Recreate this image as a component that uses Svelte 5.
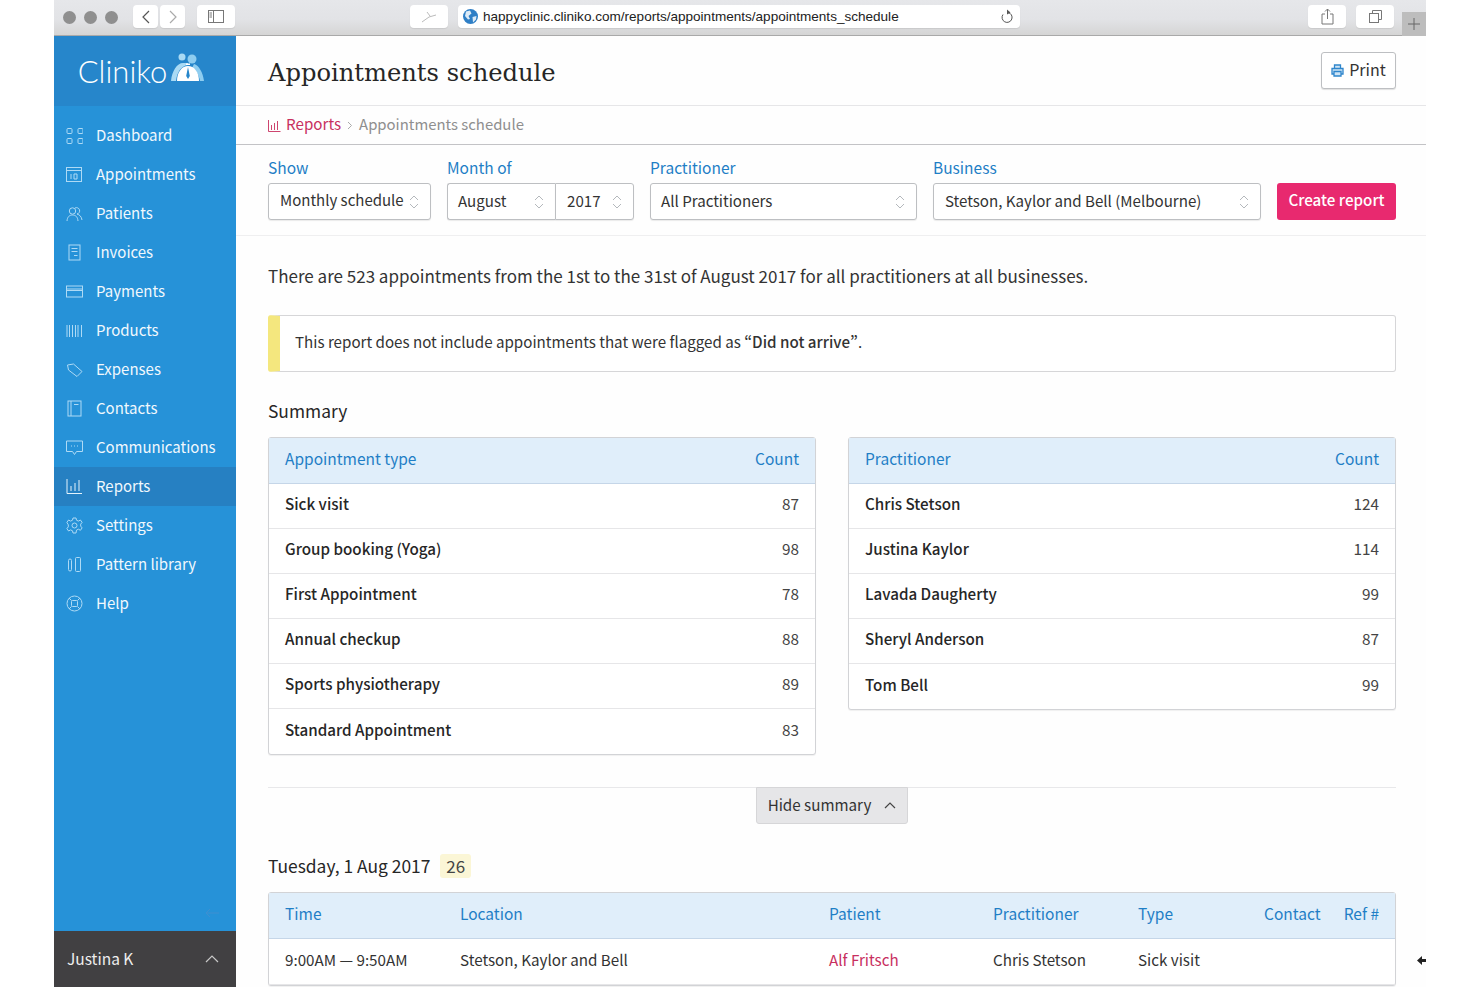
<script>
  const nav = [
    ['dashboard', 'Dashboard'],
    ['calendar', 'Appointments'],
    ['patients', 'Patients'],
    ['invoice', 'Invoices'],
    ['card', 'Payments'],
    ['barcode', 'Products'],
    ['tag', 'Expenses'],
    ['book', 'Contacts'],
    ['chat', 'Communications'],
    ['chart', 'Reports'],
    ['gear', 'Settings'],
    ['pattern', 'Pattern library'],
    ['help', 'Help']
  ];

  const icons = {
    dashboard: '<rect x="1" y="1.500" width="5" height="5" rx="1"/><rect x="12" y="1.500" width="5" height="5" rx="1"/><rect x="1" y="11.500" width="5" height="5" rx="1"/><rect x="12" y="11.500" width="5" height="5" rx="1"/>',
    calendar: '<rect x=".5" y="1.500" width="15" height="14"/><path d="M.5 4.500h15"/><path d="M5 8v5M8 8h3v5H8z"/>',
    patients: '<circle cx="6.500" cy="6" r="3.200"/><path d="M1 16c.3-4 2.300-6 5.500-6s5.200 2 5.500 6"/><path d="M9 3a3.200 3.200 0 1 1 2 6c2.500.7 4.500 2.500 5 6"/>',
    invoice: '<rect x="3" y="1" width="11" height="15"/><path d="M5.500 4.500h6M5.500 7.500h6M8 11.500h3.500"/>',
    card: '<rect x=".5" y="3" width="16" height="11"/><path d="M.5 6h16M.5 7.500h16"/>',
    barcode: '<path d="M1 3v12M3.500 3v12M6.500 3v12M9.500 3v12M12 3v12M15.500 3v12"/>',
    tag: '<path d="M1.500 4l6-1 8.500 7.500-5 5L2.500 9z"/>',
    book: '<rect x="2" y="1" width="13" height="15"/><path d="M5 1v15M8 4.500h4.500"/>',
    chat: '<path d="M.5 2h16v10.500h-6l-2 3-2-3h-6z"/><path d="M5 7h1M8 7h1M11 7h1"/>',
    chart: '<path d="M1 1v14.500h15"/><path d="M5 8v5M9 5v8M13 2v11"/>',
    gear: '<circle cx="8.500" cy="8.500" r="2.500"/><path d="M7 1h3l.5 2.200 1.900.9 2-1.100 1.700 2.400-1.400 1.700v2l1.400 1.800-1.700 2.400-2-1.100-1.900.9L10 16H7l-.5-2.200-1.900-.9-2 1.100-1.700-2.400 1.400-1.800v-2L.9 5.400 2.600 3l2 1.100 1.900-.9z"/>',
    pattern: '<rect x="2.500" y="3" width="3" height="12" rx="1.500"/><rect x="9.500" y="1.500" width="5" height="14" rx="1"/>',
    help: '<circle cx="8.500" cy="8.500" r="7.500"/><rect x="5.500" y="5.500" width="6" height="6" rx="1"/><path d="M3 3l2.500 2.500M14 3l-2.500 2.500M3 14l2.500-2.500M14 14l-2.500-2.500"/>'
  };

  const types = [
    ['Sick visit', 87],
    ['Group booking (Yoga)', 98],
    ['First Appointment', 78],
    ['Annual checkup', 88],
    ['Sports physiotherapy', 89],
    ['Standard Appointment', 83]
  ];

  const practitioners = [
    ['Chris Stetson', 124],
    ['Justina Kaylor', 114],
    ['Lavada Daugherty', 99],
    ['Sheryl Anderson', 87],
    ['Tom Bell', 99]
  ];
</script>

{#snippet updown()}
  <svg class="updown" width="10" height="16" viewBox="0 0 10 16" fill="none" stroke="#b4b8bc" stroke-width="1">
    <path d="M1 6l4-4 4 4M1 10l4 4 4-4" />
  </svg>
{/snippet}

{#snippet summary(title, rows)}
  <table class="data">
    <thead>
      <tr><th>{title}</th><th class="num">Count</th></tr>
    </thead>
    <tbody>
      {#each rows as row}
        <tr><td class="strong">{row[0]}</td><td class="num">{row[1]}</td></tr>
      {/each}
    </tbody>
  </table>
{/snippet}

<div class="window">
  <header class="chrome">
    <div class="lights"><i></i><i></i><i></i></div>
    <div class="tool back">
      <svg width="10" height="16" viewBox="0 0 10 16" fill="none" stroke="#555" stroke-width="1.200"><path d="M8 2L2 8l6 6" /></svg>
    </div>
    <div class="tool back">
      <svg width="10" height="16" viewBox="0 0 10 16" fill="none" stroke="#aaa" stroke-width="1.200"><path d="M2 2l6 6-6 6" /></svg>
    </div>
    <div class="tool side">
      <svg width="16" height="13" viewBox="0 0 16 13" fill="none" stroke="#777"><rect x=".5" y=".5" width="15" height="12" /><path d="M5.500 .5v12M1.500 3h2.500M1.500 5h2.500M1.500 7h2.500" /></svg>
    </div>
    <div class="tool pin">
      <svg width="16" height="12" viewBox="0 0 16 12" fill="none" stroke="#bbb"><path d="M1 11l7-5 7-2M6 1l3 4" /></svg>
    </div>
    <div class="url">
      <svg width="15" height="15" viewBox="0 0 15 15"><circle cx="7.500" cy="7.500" r="7.500" fill="#2f7fc6" /><path d="M3 2.500l4-1 1.500 3-3 2.500 1.500 3-2 .5-3-3.500zM9.500 8l4-1-.5 3.500-3 3z" fill="#dcebf7" /></svg>
      <span class="address">happyclinic.cliniko.com/reports/appointments/appointments_schedule</span>
      <svg class="reload" width="14" height="15" viewBox="0 0 14 15" fill="none" stroke="#555"><path d="M8 3.500a5 5 0 1 1-5 2" /><path d="M7 .5l3.500 3-3.500 2z" fill="#555" stroke="none" /></svg>
    </div>
    <div class="tool share">
      <svg width="13" height="17" viewBox="0 0 13 17" fill="none" stroke="#777"><path d="M4 6H1v10h11V6H9M6.500 11V1M4 3.500L6.500 1 9 3.500" /></svg>
    </div>
    <div class="tool tabs">
      <svg width="13" height="13" viewBox="0 0 13 13" fill="none" stroke="#777"><rect x=".5" y="3.500" width="9" height="9" /><path d="M3.500 3.500v-3h9v9h-3" /></svg>
    </div>
    <div class="plus">
      <svg width="12" height="12" viewBox="0 0 12 12" stroke="#666"><path d="M6 0v12M0 6h12" /></svg>
    </div>
  </header>

  <div class="body">
    <aside class="sidebar">
      <div class="logo">
        <span class="wordmark">Cliniko</span>
        <svg width="33" height="30" viewBox="0 0 33 30">
          <circle cx="21" cy="7" r="4.500" fill="#8ecdf0" />
          <path d="M23 12c5 1 9 9 10 17h-4c-1-6-4-11-8-13z" fill="#8ecdf0" />
          <circle cx="11" cy="5" r="3.500" fill="#a9daf4" />
          <path d="M0 29C1 19 6 11 12 11h5v2C10 14 6 20 5 29z" fill="#a9daf4" />
          <path d="M6 29c0-9 5-15 11-15s11 6 11 15z" fill="#fff" />
          <path d="M15 11.500h4v1.500h-4z" fill="#fff" />
          <path d="M17 15l1.800 9-1.800 3-1.800-3z" fill="#2686cb" />
        </svg>
      </div>
      <nav class="menu">
        {#each nav as [icon, label]}
          <a class="item" class:active={label === 'Reports'} href="#{icon}">
            <svg width="17" height="17" viewBox="0 0 17 17" fill="none" stroke={label === 'Reports' ? '#e4f3fc' : '#aedaf5'} stroke-width="1">{@html icons[icon]}</svg>
            <span>{label}</span>
          </a>
        {/each}
      </nav>
      <div class="collapse">
        <svg width="14" height="10" viewBox="0 0 14 10" fill="none" stroke="#3f8fd0"><path d="M14 5H1M5 1L1 5l4 4" /></svg>
      </div>
      <div class="user">
        <span>Justina K</span>
        <svg width="14" height="8" viewBox="0 0 14 8" fill="none" stroke="#c8c8c8" stroke-width="1.200"><path d="M1 7l6-6 6 6" /></svg>
      </div>
    </aside>

    <main class="main">
      <div class="titlebar">
        <h1>Appointments schedule</h1>
        <button class="print">
          <svg width="13" height="13" viewBox="0 0 13 13" fill="#cfe4f5" stroke="#2f86cc" stroke-width="1.300"><path d="M3.500 4V1h6v3M3 10H1V4.500h11V10h-2M3 7.500h7V12H3z" /></svg>
          <span>Print</span>
        </button>
      </div>

      <div class="crumbs">
        <svg width="13" height="13" viewBox="0 0 13 13" fill="none" stroke="#c8305f" stroke-width=".9"><path d="M.5 1v11.500h12M3.500 6v5M6.500 4v7M9.500 2v9" /></svg>
        <a href="#reports">Reports</a>
        <svg width="6" height="9" viewBox="0 0 6 9" fill="none" stroke="#aaa"><path d="M1 1l3.500 3.500L1 8" /></svg>
        <span>Appointments schedule</span>
      </div>

      <form class="filters">
        <div class="field w-show">
          <span class="caption">Show</span>
          <div class="select"><span>Monthly schedule</span>{@render updown()}</div>
        </div>
        <div class="field w-month">
          <span class="caption">Month of</span>
          <div class="pair">
            <div class="select month"><span>August</span>{@render updown()}</div>
            <div class="select year"><span>2017</span>{@render updown()}</div>
          </div>
        </div>
        <div class="field w-pract">
          <span class="caption">Practitioner</span>
          <div class="select"><span>All Practitioners</span>{@render updown()}</div>
        </div>
        <div class="field w-biz">
          <span class="caption">Business</span>
          <div class="select"><span>Stetson, Kaylor and Bell (Melbourne)</span>{@render updown()}</div>
        </div>
        <button class="create" type="button">Create report</button>
      </form>

      <section class="content">
        <p class="lead">There are 523 appointments from the 1st to the 31st of August 2017 for all practitioners at all businesses.</p>

        <div class="notice">
          <span>This report does not include appointments that were flagged as <b>“Did not arrive”</b>.</span>
        </div>

        <h2 class="sum-title">Summary</h2>
        <div class="columns">
          {@render summary('Appointment type', types)}
          {@render summary('Practitioner', practitioners)}
        </div>

        <div class="divider">
          <button class="hide" type="button">
            <span>Hide summary</span>
            <svg width="12" height="7" viewBox="0 0 12 7" fill="none" stroke="#444" stroke-width="1.200"><path d="M1 6l5-5 5 5" /></svg>
          </button>
        </div>

        <h2 class="day">Tuesday, 1 Aug 2017 <span class="badge">26</span></h2>

        <table class="data schedule">
          <colgroup>
            <col class="c-time" /><col class="c-loc" /><col class="c-pat" /><col class="c-pra" /><col class="c-typ" /><col class="c-con" /><col />
          </colgroup>
          <thead>
            <tr><th>Time</th><th>Location</th><th>Patient</th><th>Practitioner</th><th>Type</th><th>Contact</th><th class="num ref">Ref #</th></tr>
          </thead>
          <tbody>
            <tr>
              <td>9:00AM — 9:50AM</td>
              <td>Stetson, Kaylor and Bell</td>
              <td><a href="#alf">Alf Fritsch</a></td>
              <td>Chris Stetson</td>
              <td>Sick visit</td>
              <td></td>
              <td></td>
            </tr>
          </tbody>
        </table>
      </section>
    </main>

    <svg class="cursor" width="10" height="9" viewBox="0 0 10 9"><path d="M5 0v3h4v3H5v3L0 4.500z" fill="#222" /></svg>
  </div>
</div>

<style>
  :global(body) {
    margin: 0;
    background: #fff;
    font-family: "Noto Sans CJK SC", "Noto Sans", sans-serif;
    color: #2b2b2b;
  }

  .window {
    margin: 0 54px;
    height: 987px;
    overflow: hidden;
    display: flex;
    flex-direction: column;
  }

  .chrome {
    height: 36px;
    flex: none;
    box-sizing: border-box;
    display: flex;
    align-items: flex-start;
    padding-top: 5px;
    background: linear-gradient(#e6e7ea, #e2e3e6 55%, #d5d5d5);
    border-bottom: 1px solid #a9a9a9;
  }
  .lights {
    display: flex;
    gap: 8px;
    margin: 6px 15px 0 9px;
  }
  .lights i {
    width: 13px;
    height: 13px;
    border-radius: 50%;
    background: #8f8f8f;
  }
  .tool {
    height: 23px;
    background: #fff;
    border-radius: 4px;
    display: flex;
    align-items: center;
    justify-content: center;
    box-shadow: 0 1px 1px rgba(0, 0, 0, .08);
  }
  .back { width: 25px; margin-right: 2px; }
  .side { width: 38px; margin-left: 10px; }
  .pin { width: 38px; margin-left: 175px; }
  .share { width: 38px; margin-left: 288px; }
  .tabs { width: 38px; margin-left: 10px; }
  .url {
    width: 562px;
    height: 23px;
    margin-left: 10px;
    box-sizing: border-box;
    padding: 0 6px 0 5px;
    background: #fff;
    border-radius: 4px;
    display: flex;
    align-items: center;
    gap: 5px;
    box-shadow: 0 1px 1px rgba(0, 0, 0, .08);
  }
  .address {
    font-family: "Liberation Sans", sans-serif;
    font-size: 13.550px;
    color: #222;
    flex: 1;
  }
  .plus {
    width: 24px;
    height: 24px;
    margin: 7px 0 0 auto;
    background: #bdbdbd;
    display: flex;
    align-items: center;
    justify-content: center;
  }

  .body {
    flex: 1;
    display: flex;
    position: relative;
    min-height: 0;
  }

  .sidebar {
    width: 182px;
    flex: none;
    background: #2692d8;
    display: flex;
    flex-direction: column;
  }
  .logo {
    height: 70px;
    flex: none;
    background: #2686cb;
    display: flex;
    align-items: center;
    justify-content: center;
    gap: 4px;
    padding: 0 8px 0 0;
  }
  .wordmark {
    font-family: Lato, sans-serif;
    font-weight: 300;
    font-size: 31px;
    color: #fff;
  }
  .logo svg { margin-top: -8px; }
  .menu {
    display: flex;
    flex-direction: column;
    padding-top: 10px;
    flex: 1;
  }
  .item {
    height: 39px;
    display: flex;
    align-items: center;
    gap: 13px;
    padding-left: 12px;
    color: #f1f8fd;
    font-size: 15px;
    text-decoration: none;
  }
  .item span { padding-bottom: 2px; }
  .item.active { background: #2680c2; }
  .collapse {
    height: 35px;
    display: flex;
    justify-content: flex-end;
    align-items: flex-start;
    padding: 12px 17px 0 0;
    box-sizing: border-box;
  }
  .user {
    height: 56px;
    flex: none;
    box-sizing: border-box;
    background: #414042;
    color: #efefef;
    display: flex;
    align-items: center;
    justify-content: space-between;
    padding: 0 17px 0 13px;
    font-size: 15.500px;
  }
  .user span { padding-bottom: 2px; }

  .main {
    flex: 1;
    min-width: 0;
    background: #fefefe;
  }
  .titlebar {
    height: 70px;
    box-sizing: border-box;
    display: flex;
    align-items: center;
    justify-content: space-between;
    padding: 0 30px 0 32px;
    border-bottom: 1px solid #e6e6e8;
  }
  h1 {
    margin: 0;
    padding-top: 4px;
    font-family: "DejaVu Serif", serif;
    font-weight: 400;
    font-size: 24.200px;
    color: #262626;
  }
  .print {
    width: 75px;
    height: 37px;
    margin-top: -1px;
    background: #fff;
    border: 1px solid #bdbfc2;
    border-radius: 3px;
    box-shadow: 0 1px 1px rgba(0, 0, 0, .12);
    font: inherit;
    font-size: 16px;
    color: #333;
    display: flex;
    align-items: center;
    justify-content: center;
    gap: 5px;
    padding: 0;
  }
  .print span { padding-bottom: 3px; }
  .crumbs {
    height: 39px;
    box-sizing: border-box;
    display: flex;
    align-items: center;
    gap: 5px;
    padding-left: 32px;
    border-bottom: 1px solid #c3c3c6;
    font-size: 15.200px;
    color: #8f8f8f;
  }
  .crumbs a, .crumbs span { padding-bottom: 4px; }
  .crumbs a { color: #c8305f; text-decoration: none; }
  .crumbs span { font-size: 14.900px; }
  .crumbs svg:nth-of-type(2) { margin: 0 1px; }

  .filters {
    height: 91px;
    box-sizing: border-box;
    display: flex;
    align-items: flex-end;
    gap: 16px;
    padding: 0 30px 15px 32px;
    border-bottom: 1px solid #efeff0;
  }
  .field { display: flex; flex-direction: column; gap: 6px; }
  .w-show { width: 163px; }
  .w-month { width: 187px; }
  .w-pract { width: 267px; }
  .w-biz { width: 328px; }
  .w-pract .select { padding-left: 10px; }
  .caption {
    font-size: 15.500px;
    line-height: 20px;
    color: #1f7ec6;
  }
  .select {
    height: 37px;
    box-sizing: border-box;
    background: #fff;
    border: 1px solid #bdbfc2;
    border-radius: 3px;
    box-shadow: 0 1px 1px rgba(0, 0, 0, .08);
    display: flex;
    align-items: center;
    justify-content: space-between;
    padding: 0 11px;
    font-size: 15.100px;
    color: #333;
    white-space: nowrap;
  }
  .select span { padding-bottom: 4px; }
  .w-show .select span { font-size: 15px; }
  .pair { display: flex; }
  .month { width: 108px; padding-left: 10px; border-radius: 3px 0 0 3px; border-right: 0; }
  .year { flex: 1; border-radius: 0 3px 3px 0; }
  .create {
    width: 119px;
    height: 37px;
    flex: none;
    padding: 0 0 5px;
    border: 0;
    border-radius: 3px;
    background: #e8296f;
    color: #fff;
    font: inherit;
    font-size: 15.200px;
    font-weight: 500;
  }

  .content { padding: 0 30px 0 32px; }
  .lead {
    margin: 0;
    padding-top: 28px;
    font-size: 17px;
    line-height: 24px;
    color: #333;
  }
  .notice {
    margin-top: 27px;
    height: 57px;
    box-sizing: border-box;
    background: #fff;
    border: 1px solid #d6d6d8;
    border-left: 12px solid #f4e77e;
    border-radius: 3px;
    display: flex;
    align-items: center;
    padding: 0 0 6px 15px;
    font-size: 15.150px;
    color: #333;
  }
  .notice b { font-weight: 500; font-feature-settings: "pwid"; }
  .sum-title {
    margin: 27px 0 14px;
    font-weight: 400;
    font-size: 17.400px;
    line-height: 24px;
    color: #262626;
  }
  .columns {
    display: grid;
    grid-template-columns: 1fr 1fr;
    gap: 32px;
    align-items: start;
  }

  table.data {
    width: 100%;
    border-collapse: separate;
    border-spacing: 0;
    background: #fff;
    border: 1px solid #d2d3d6;
    border-radius: 3px;
    box-shadow: 0 1px 1px rgba(0, 0, 0, .06);
    font-size: 15.500px;
  }
  .data th {
    height: 46px;
    box-sizing: border-box;
    padding: 0 16px 5px;
    background: #e0eefa;
    border-bottom: 1px solid #c5d6e8;
    text-align: left;
    font-weight: 400;
    color: #1f7ec6;
  }
  .data th.ref { padding-left: 0; white-space: nowrap; }
  .data td {
    height: 45px;
    box-sizing: border-box;
    padding: 0 16px 6px;
    border-bottom: 1px solid #e6e6e8;
    font-size: 15.300px;
    color: #333;
  }
  .data tr:last-child td { border-bottom: 0; }
  .data td.strong { font-weight: 500; font-size: 15.200px; color: #262626; }
  .data .num { text-align: right; }
  .data td.num { color: #444; }
  .data td a { color: #c8305f; text-decoration: none; }

  .divider {
    margin-top: 32px;
    border-top: 1px solid #e8e8ea;
    display: flex;
    justify-content: center;
  }
  .hide {
    width: 152px;
    height: 37px;
    margin-top: -1px;
    padding: 0;
    background: #e6e6e8;
    border: 1px solid #d6d6d8;
    border-radius: 0 0 3px 3px;
    font: inherit;
    font-size: 15.200px;
    color: #333;
    display: flex;
    align-items: center;
    justify-content: center;
    gap: 13px;
  }
  .hide span { padding-bottom: 4px; }
  .day {
    margin: 30px 0 14px;
    font-weight: 400;
    font-size: 17.400px;
    line-height: 24px;
    color: #262626;
  }
  .badge {
    display: inline-block;
    margin-left: 6px;
    padding: 0 6px;
    background: #fbf6d6;
    border-radius: 3px;
    font-size: 17px;
    color: #444;
  }

  .schedule { table-layout: fixed; border-bottom: 0; }
  .schedule tr:last-child td { border-bottom: 1px solid #e6e6e8; }
  .schedule td { height: 46px; font-size: 15.200px; }
  .c-time { width: 175px; }
  .c-loc { width: 369px; }
  .c-pat { width: 164px; }
  .c-pra { width: 145px; }
  .c-typ { width: 126px; }
  .c-con { width: 80px; }

  .cursor {
    position: absolute;
    right: -1px;
    top: 920px;
  }
</style>
